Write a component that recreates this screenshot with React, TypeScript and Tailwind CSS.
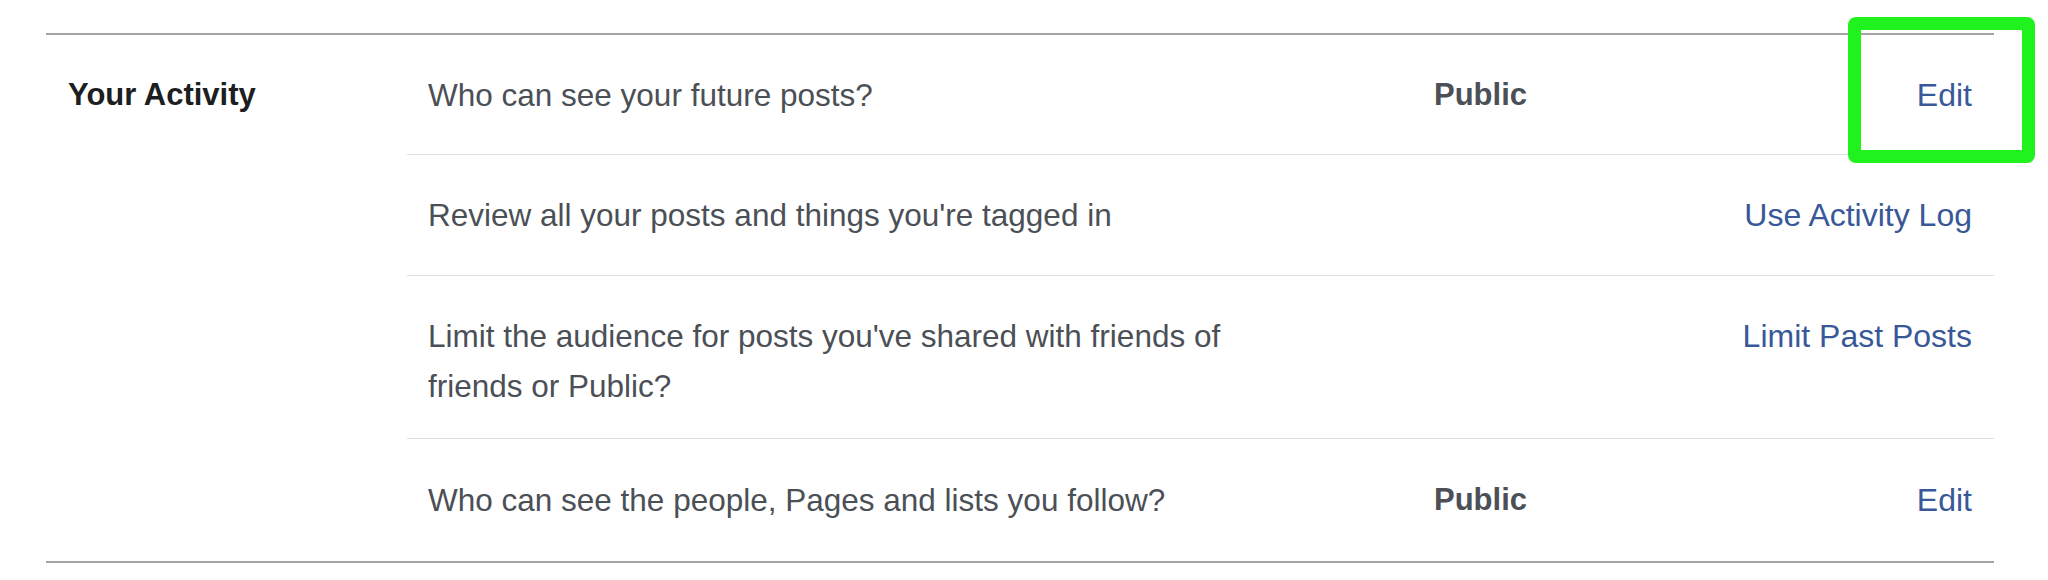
import React from "react";

type Row = {
  text: React.ReactNode;
  value?: string;
  action: string;
  pad: string;
};

const rows: Row[] = [
  { text: "Who can see your future posts?", value: "Public", action: "Edit", pad: "pt-[35px] pb-[34px]" },
  {
    text: "Review all your posts and things you're tagged in",
    action: "Use Activity Log",
    pad: "pt-[35px] pb-[35px]",
  },
  {
    text: "Limit the audience for posts you've shared with friends of friends or Public?",
    action: "Limit Past Posts",
    pad: "pt-[35px] pb-[27px]",
  },
  {
    text: "Who can see the people, Pages and lists you follow?",
    value: "Public",
    action: "Edit",
    pad: "pt-[36px] pb-[36px]",
  },
];

export default function App() {
  return (
    <div
      className="relative w-[2048px] h-[580px] bg-white overflow-hidden"
      style={{ fontFamily: '"Liberation Sans", Arial, Helvetica, sans-serif' }}
    >
      <div className="pt-[33px] pl-[46px]">
        <div className="w-[1948px] flex border-t-2 border-b-2 border-[#a3a3a3]">
          <div className="w-[361px] shrink-0 pl-[22px] pt-[35px] text-[31px] leading-[50px] font-bold text-[#1c1e21]">
            Your Activity
          </div>
          <div className="flex-1 flex flex-col">
            {rows.map((r, i) => (
              <div
                key={i}
                className={
                  "flex items-start pl-[21px] pr-[22px] leading-[50px] " +
                  r.pad +
                  " " +
                  (i < rows.length - 1 ? "border-b border-[#dddfe2]" : "")
                }
              >
                <div className="flex-1 min-w-0">
                  <div className="max-w-[870px] text-[31.5px] text-[#4b4f56]">{r.text}</div>
                </div>
                <div className="w-[278px] shrink-0 text-[31px] font-bold text-[#4b4f56]">{r.value ?? ""}</div>
                <div className="w-[260px] shrink-0 text-right text-[32px] text-[#385898]">{r.action}</div>
              </div>
            ))}
          </div>
        </div>
      </div>
      <div className="absolute left-[1848px] top-[17px] w-[187px] h-[146px] border-[13px] border-[#1ff21c] rounded-[8px]" />
    </div>
  );
}
